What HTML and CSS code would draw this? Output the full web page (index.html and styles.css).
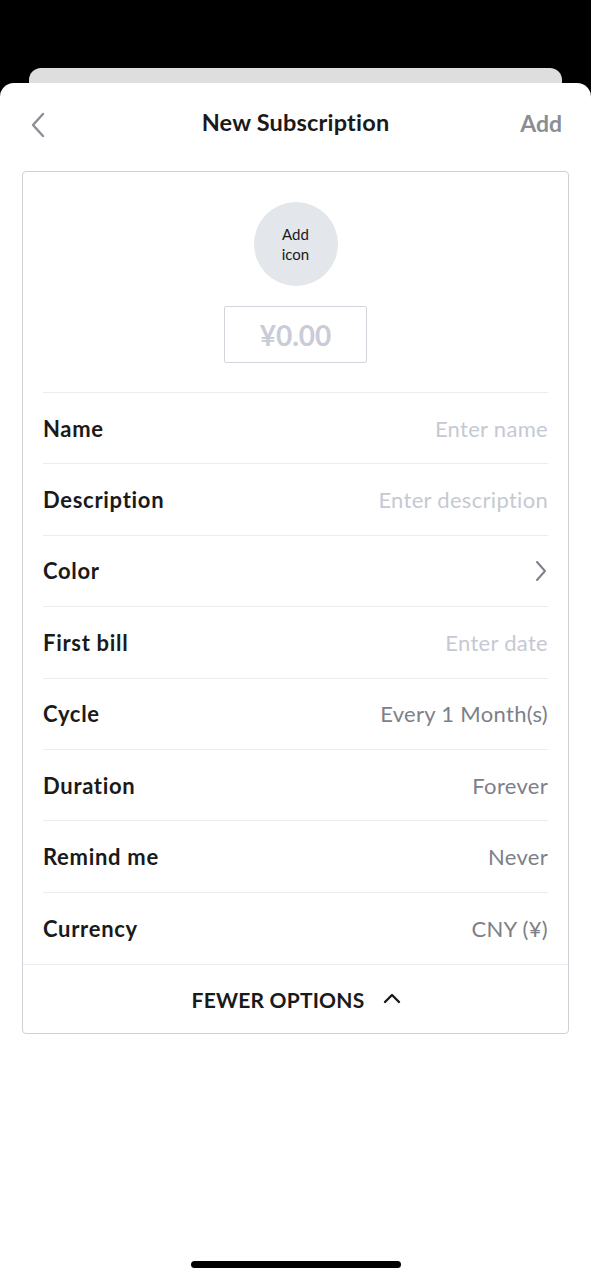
FILE: index.html
```html
<!DOCTYPE html>
<html>
<head>
<meta charset="utf-8">
<link rel="stylesheet" href="styles.css">
</head>
<body>
<div class="screen">
  <div class="backcard"></div>
  <div class="sheet">
    <header class="nav">
      <div class="back">
        <svg width="16" height="26" viewBox="0 0 16 26"><path d="M13 2 L3 13 L13 24" fill="none" stroke="#8b8e96" stroke-width="2.4" stroke-linecap="round" stroke-linejoin="round"/></svg>
      </div>
      <h1 class="title">New Subscription</h1>
      <div class="add">Add</div>
    </header>
    <section class="card">
      <div class="top">
        <div class="iconpick">Add<br>icon</div>
        <div class="amount">¥0.00</div>
      </div>
      <div class="rows">
        <div class="row"><span class="label">Name</span><span class="value ph">Enter name</span></div>
        <div class="row"><span class="label">Description</span><span class="value ph">Enter description</span></div>
        <div class="row"><span class="label">Color</span>
          <svg class="chev" width="14" height="24" viewBox="0 0 14 24"><path d="M3 3 L11 12 L3 21" fill="none" stroke="#7d8089" stroke-width="2" stroke-linecap="round" stroke-linejoin="round"/></svg>
        </div>
        <div class="row"><span class="label">First bill</span><span class="value ph">Enter date</span></div>
        <div class="row"><span class="label">Cycle</span><span class="value">Every 1 Month(s)</span></div>
        <div class="row"><span class="label">Duration</span><span class="value">Forever</span></div>
        <div class="row"><span class="label">Remind me</span><span class="value">Never</span></div>
        <div class="row last"><span class="label">Currency</span><span class="value">CNY (¥)</span></div>
      </div>
      <div class="footer">
        <span>FEWER OPTIONS</span>
        <svg width="18" height="12" viewBox="0 0 18 12"><path d="M2 10 L9 3 L16 10" fill="none" stroke="#1a1a1a" stroke-width="2.4" stroke-linecap="round" stroke-linejoin="round"/></svg>
      </div>
    </section>
    <div class="spacer"></div>
    <div class="home"></div>
  </div>
</div>
</body>
</html>
```
FILE: styles.css
```css
* { box-sizing: border-box; }
html, body { margin: 0; padding: 0; }
body {
  background: #000;
  font-family: Lato, "Open Sans", "Liberation Sans", sans-serif;
  color: #1a1a1a;
}
.screen {
  width: 591px;
  height: 1280px;
  display: flex;
  flex-direction: column;
  padding-top: 68px;
  overflow: hidden;
}
.backcard {
  height: 30px;
  margin: 0 29px;
  background: #dedede;
  border-radius: 12px 12px 0 0;
  flex-shrink: 0;
}
.sheet {
  margin-top: -15px;
  flex: 1;
  background: #fff;
  border-radius: 14px 14px 0 0;
  display: flex;
  flex-direction: column;
  position: relative;
}
.nav {
  height: 88px;
  display: flex;
  align-items: center;
  justify-content: space-between;
  padding: 0 29px 0 30px;
  position: relative;
}
.back { width: 16px; height: 26px; margin-top: -4px; }
.title {
  position: absolute;
  left: 0; right: 0;
  text-align: center;
  margin: 0;
  font-size: 23.5px;
  font-weight: 700;
  letter-spacing: 0.2px;
  top: 25px;
  pointer-events: none;
}
.add {
  font-size: 23px;
  color: #8a8d94;
  font-weight: 700;
  margin-top: -8px;
}
.card {
  margin: 0 22px;
  border: 1px solid #cfd1d6;
  border-radius: 4px;
  display: flex;
  flex-direction: column;
}
.top {
  display: flex;
  flex-direction: column;
  align-items: center;
  padding-top: 30px;
  margin: 0 20px;
  padding-bottom: 29px;
  border-bottom: 1px solid #ebecef;
}
.iconpick {
  width: 84px; height: 84px;
  border-radius: 50%;
  background: #e3e6ea;
  display: flex;
  align-items: center;
  justify-content: center;
  text-align: center;
  font-size: 15px;
  line-height: 20px;
  color: #1a1a1a;
}
.amount {
  margin-top: 20px;
  width: 143px;
  height: 57px;
  border: 1px solid #d3d5dc;
  border-radius: 2px;
  display: flex;
  align-items: center;
  justify-content: center;
  font-size: 28px;
  font-weight: 700;
  color: #c9ccd6;
}
.rows { padding: 0 20px; }
.row {
  height: 71.4px;
  display: flex;
  align-items: center;
  justify-content: space-between;
  border-bottom: 1px solid #ebecef;
}
.row.last { border-bottom: none; }
.label {
  font-size: 22px;
  font-weight: 700;
  letter-spacing: 0.7px;
  color: #1a1a1a;
}
.value {
  font-size: 22px;
  letter-spacing: 0.3px;
  color: #7d8089;
}
.value.ph { color: #c6c9d2; }
.chev { margin-right: 0; }
.footer {
  border-top: 1px solid #ebecef;
  height: 69px;
  display: flex;
  align-items: center;
  justify-content: center;
  gap: 19px;
  font-size: 21px;
  font-weight: 700;
  letter-spacing: 0.2px;
  color: #1a1a1a;
  padding-left: 2px;
}
.footer svg { margin-top: -2px; }
.spacer { flex: 1; }
.home {
  width: 210px;
  height: 7px;
  border-radius: 4px;
  background: #000;
  align-self: center;
  margin-bottom: 12px;
}
```
